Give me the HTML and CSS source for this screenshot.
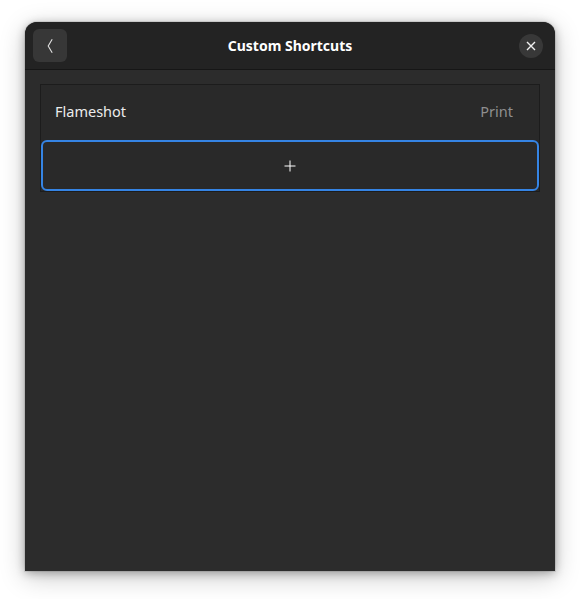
FILE: index.html
```html
<!DOCTYPE html>
<html>
<head>
<meta charset="utf-8">
<link rel="stylesheet" href="styles.css">
</head>
<body>
<div class="window">
  <header class="header">
    <button class="back" aria-label="Back">
      <svg width="16" height="16" viewBox="0 0 16 16"><path d="M10.2 1.2 L6.2 8 L10.2 14.8" fill="none" stroke="#e0e0e0" stroke-width="1.1"/></svg>
    </button>
    <div class="title">Custom Shortcuts</div>
    <div class="end">
      <button class="close" aria-label="Close">
        <svg width="10" height="10" viewBox="0 0 10 10"><path d="M1 1 L9 9 M9 1 L1 9" fill="none" stroke="#f0f0f0" stroke-width="1.4"/></svg>
      </button>
    </div>
  </header>
  <main class="content">
    <div class="list">
      <div class="row">
        <span class="name">Flameshot</span>
        <span class="accel">Print</span>
      </div>
      <div class="add">
        <svg width="12" height="12" viewBox="0 0 12 12"><path d="M6 0.5 V11.5 M0.5 6 H11.5" fill="none" stroke="#ffffff" stroke-width="1"/></svg>
      </div>
    </div>
  </main>
</div>
</body>
</html>
```
FILE: styles.css
```css
html, body {
  margin: 0;
  padding: 0;
  background: #ffffff;
}
body {
  height: 599px;
  box-sizing: border-box;
  overflow: hidden;
  padding: 22px 25px 0 25px;
  font-family: "Noto Sans", "Open Sans", sans-serif;
}
.window {
  width: 530px;
  height: 549px;
  background: #2c2c2c;
  border-radius: 12px 12px 0 0;
  box-shadow: 0 2px 10px rgba(0,0,0,0.3), 0 6px 26px rgba(0,0,0,0.22), 0 0 0 1px rgba(0,0,0,0.08);
  display: flex;
  flex-direction: column;
  overflow: hidden;
}
.header {
  height: 48px;
  background: #232323;
  border-bottom: 1px solid #161616;
  display: grid;
  grid-template-columns: 1fr auto 1fr;
  align-items: center;
  padding: 0 8px;
  box-sizing: border-box;
  flex: none;
}
.back {
  width: 34px;
  height: 33px;
  border: none;
  border-radius: 6px;
  background: #373737;
  display: flex;
  align-items: center;
  justify-content: center;
  padding: 0;
}
.title {
  color: #ffffff;
  font-weight: 700;
  font-size: 14px;
  padding-bottom: 1px;
}
.end {
  display: flex;
  justify-content: flex-end;
}
.close {
  width: 24px;
  height: 24px;
  margin-right: 4px;
  border: none;
  border-radius: 50%;
  background: #383838;
  display: flex;
  align-items: center;
  justify-content: center;
  padding: 0;
}
.content {
  padding: 14px 15px;
}
.list {
  border: 1px solid #1c1c1c;
  background: #292929;
}
.row {
  height: 55px;
  display: flex;
  align-items: center;
  justify-content: space-between;
  padding: 0 26px 3px 14px;
  box-sizing: border-box;
}
.name {
  color: #ececec;
  font-size: 14.5px;
}
.accel {
  color: #8f8f8f;
  font-size: 14.5px;
}
.add {
  height: 47px;
  border: 2px solid #3584e4;
  border-radius: 6px;
  display: flex;
  align-items: center;
  justify-content: center;
}
```
